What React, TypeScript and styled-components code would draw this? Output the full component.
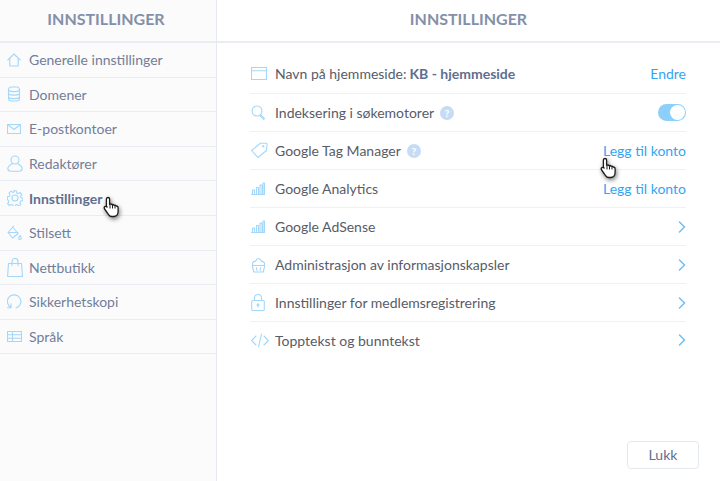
import React from 'react';
import styled, { createGlobalStyle } from 'styled-components';

const GlobalStyle = createGlobalStyle`
  html, body {
    margin: 0;
    padding: 0;
    background: #fff;
  }
  body {
    font-family: Lato, "Liberation Sans", sans-serif;
    overflow: hidden;
  }
`;

const Wrapper = styled.div`
  width: 720px;
  height: 481px;
  display: flex;
  overflow: hidden;
`;

const Sidebar = styled.aside`
  width: 217px;
  height: 100%;
  flex-shrink: 0;
  box-sizing: border-box;
  background: #fbfbfc;
  border-right: 1px solid #e6eaf0;
`;

const SideTitle = styled.h2`
  margin: 0;
  height: 43px;
  box-sizing: border-box;
  border-bottom: 2px solid #e9edf3;
  display: flex;
  align-items: center;
  justify-content: center;
  padding: 0 4px 5px 0;
  font-size: 16px;
  font-weight: 700;
  color: #8490a9;
`;

const SideRow = styled.div<{ $active?: boolean }>`
  position: relative;
  height: 34.6px;
  box-sizing: border-box;
  border-bottom: 1.5px solid #e9edf3;
  display: flex;
  align-items: center;
  gap: 8px;
  padding-left: 7px;
  font-size: 14px;
  font-weight: ${({ $active }) => ($active ? 700 : 400)};
  color: ${({ $active }) => ($active ? '#5f6e8f' : '#727e99')};
`;

const IconBox = styled.span`
  width: 14px;
  height: 18px;
  display: flex;
  align-items: center;
  justify-content: flex-start;
  flex-shrink: 0;
  color: #a3d8fb;
  overflow: visible;
`;

const Main = styled.main`
  flex: 1;
  height: 100%;
  display: flex;
  flex-direction: column;
`;

const MainTitle = styled.h1`
  margin: 0;
  height: 43px;
  box-sizing: border-box;
  border-bottom: 2px solid #e9edf3;
  display: flex;
  align-items: center;
  justify-content: center;
  padding-bottom: 5px;
  font-size: 16px;
  font-weight: 700;
  color: #8490a9;
`;

const List = styled.div`
  margin: 12px 34px 0 33px;
  flex: 1;
`;

const Row = styled.div`
  position: relative;
  height: 38px;
  box-sizing: border-box;
  border-bottom: 1px solid #eff1f5;
  display: flex;
  align-items: center;
  font-size: 14px;
  color: #575c68;

  &:first-child {
    height: 39px;
    padding-bottom: 1px;
  }

  &:last-child {
    border-bottom: none;
    padding-bottom: 2px;
  }
`;

const RowIcon = styled.span`
  width: 25px;
  height: 20px;
  box-sizing: border-box;
  padding-left: 1px;
  display: flex;
  align-items: center;
  flex-shrink: 0;
  color: #a3d8fb;
`;

const Label = styled.span`
  flex: 1;
  display: flex;
  align-items: center;
  gap: 6px;
  white-space: nowrap;
`;

const Strong = styled.b`
  color: #5f6e8f;
  font-weight: 700;
  margin-left: 3px;
`;

const Action = styled.a`
  color: #33a4f4;
  font-size: 14px;
`;

const Help = styled.span`
  width: 14px;
  height: 14px;
  border-radius: 50%;
  background: #c6dcf5;
  color: #fff;
  font-size: 10px;
  font-weight: 900;
  display: flex;
  align-items: center;
  justify-content: center;
`;

const Toggle = styled.span`
  width: 28px;
  height: 17px;
  border-radius: 9px;
  background: #8dcffb;
  position: relative;
  &::after {
    content: '';
    position: absolute;
    right: 1px;
    top: 1px;
    width: 15px;
    height: 15px;
    border-radius: 50%;
    background: #fff;
  }
`;

const Footer = styled.div`
  display: flex;
  justify-content: flex-end;
  padding: 0 21px 12px 0;
`;

const CloseButton = styled.button`
  width: 72px;
  height: 28px;
  box-sizing: border-box;
  background: #fff;
  border: 1.5px solid #e4e8ef;
  border-radius: 4px;
  padding: 0 0 2px;
  font-family: inherit;
  font-size: 14px;
  color: #5f6e8f;
`;

const CursorSpot = styled.span<{ $left: number; $top: number }>`
  position: absolute;
  left: ${({ $left }) => $left}px;
  top: ${({ $top }) => $top}px;
  width: 18px;
  height: 22px;
  filter: drop-shadow(1px 2px 2px rgba(0, 0, 0, 0.5));
`;

const Hand = () => (
  <svg width="18" height="22" viewBox="0 0 18 22">
    <path
      d="M5 1.500c1 0 1.600.7 1.600 1.600v5.200l.6-.2c.8-.2 1.500 0 1.800.6.8-.3 1.600-.1 2 .6.9-.3 1.700 0 2.100.7 1-.1 2 .5 2 1.800v3.700c0 2.600-1.600 5-4.600 5H9c-1.700 0-2.700-.8-3.600-2.200L1.600 13c-.6-.9-.4-1.900.3-2.400.7-.5 1.600-.3 2.200.4l-.7-.6V3.100C3.400 2.200 4 1.500 5 1.500z"
      fill="#fff"
      stroke="#1c1c1c"
      strokeWidth="1.300"
      strokeLinejoin="round"
    />
    <path d="M7 8.500v4M9.500 8.500v4M12 9v3.500" stroke="#1c1c1c" strokeWidth="1" fill="none" />
  </svg>
);

const Glyph = ({ children, w = 16, h = 16 }: { children: React.ReactNode; w?: number; h?: number }) => (
  <svg
    width={w}
    height={h}
    viewBox={`0 0 ${w} ${h}`}
    fill="none"
    stroke="currentColor"
    strokeWidth="1.100"
    strokeLinecap="round"
    strokeLinejoin="round"
    style={{ flexShrink: 0 }}
  >
    {children}
  </svg>
);

const HomeIcon = () => (
  <Glyph w={14} h={14}>
    <path d="M.8 7 7 1l6.200 6M2.800 5.500v7.500h8.400V5.500" />
  </Glyph>
);
const DbIcon = () => (
  <Glyph w={14} h={16}>
    <rect x="1.500" y="1" width="11" height="14" rx="3" />
    <path d="M1.500 4.500c2 1.500 9 1.500 11 0M1.500 8c2 1.500 9 1.500 11 0M1.500 11.500c2 1.500 9 1.500 11 0" />
  </Glyph>
);
const MailIcon = () => (
  <Glyph w={14} h={10}>
    <rect x=".5" y=".5" width="13" height="9" />
    <path d="m.5.500 6.500 5 6.500-5" />
  </Glyph>
);
const UserIcon = () => (
  <Glyph w={16} h={17}>
    <circle cx="8" cy="5" r="4" />
    <path d="M5.500 8.500C3 10 .8 11.500.8 13.500c0 1.500 1.200 2.700 3 2.700h8.400c1.800 0 3-1.200 3-2.700 0-2-2.200-3.500-4.700-5" />
  </Glyph>
);
const GearIcon = () => (
  <Glyph w={16} h={16}>
    <circle cx="8" cy="8" r="3" />
    <path d="M6.700.8h2.600l.4 2.100 1.500.7 1.900-1 1.700 2-1.200 1.700.4 1.500 2 .8v0l-.2 1.900-2.100.5-.8 1.500.9 1.900-2 1.500-1.600-1.300-1.600.5-.7 1.900H6.400l-.6-2-1.600-.6-1.800 1.100-1.800-1.900 1.200-1.700-.5-1.500L.3 9.400V6.800l2.100-.6.7-1.500-1-1.800 1.900-1.700 1.700 1.200 1.500-.6z" />
  </Glyph>
);
const PaintIcon = () => (
  <Glyph w={15} h={16}>
    <path d="M6.500 1 5 3 1 7.500 5.500 13l5.500-4.500L6.500 3M1.500 7.500h9.500" />
    <path d="M13 10.500c-.8 1.200-1.300 2-1.300 2.700a1.300 1.300 0 0 0 2.600 0c0-.7-.5-1.500-1.300-2.700z" />
  </Glyph>
);
const BagIcon = () => (
  <Glyph w={16} h={19}>
    <path d="M1.500 5.500h13l1 13H.6zM5 7.500V3.500a3 3 0 0 1 6 0v4" />
  </Glyph>
);
const BackupIcon = () => (
  <Glyph w={15} h={15}>
    <path d="M4 13.500A6.700 6.700 0 1 1 9 14M4 9.800v3.900H.5" />
  </Glyph>
);
const LangIcon = () => (
  <Glyph w={15} h={11}>
    <rect x=".5" y=".5" width="14" height="10" />
    <path d="M.5 3.800h14M.5 7.200h14M5.500.500v10" />
  </Glyph>
);
const BrowserIcon = () => (
  <Glyph w={16} h={13}>
    <rect x=".5" y=".5" width="15" height="12" />
    <path d="M.5 3.800h15" />
  </Glyph>
);
const SearchIcon = () => (
  <Glyph w={15} h={15}>
    <circle cx="6" cy="6" r="5" />
    <path d="m9.800 9.800 1.200 1 2.500 2.700-.8.8-2.800-2.600-.8-1.100" />
  </Glyph>
);
const TagIcon = () => (
  <Glyph w={17} h={17}>
    <path d="M.6 8.500 9.500 1.200l5.700.1c.6 0 1 .4 1 1l-.8 6.200-8.500 7zM12.800 4.300a.6.6 0 1 0 0 .1" />
  </Glyph>
);
const BarsIcon = () => (
  <Glyph w={14} h={13}>
    <path d="M.5 12.500h13M1.500 12.500V8h2v4.500M5.500 12.500v-7h2v7M9 12.500V3h2v9.500M12 12.500V1h1.500v11.500" />
  </Glyph>
);
const CookieIcon = () => (
  <Glyph w={15} h={16}>
    <path d="M1.200 8.500h12.600L12.200 15H2.800zM2 8.300C.6 6 2.600 4 4.300 4.400 5.300 2.500 6.300 1.500 7.500 1.500s2.200 1 3.200 2.900C12.400 4 14.400 6 13 8.300M5.500 10.500l.4 3M9.500 10.500l-.4 3" />
  </Glyph>
);
const LockIcon = () => (
  <Glyph w={14} h={17}>
    <rect x=".7" y="6.500" width="12.600" height="10" rx="1" />
    <path d="M3.500 6.500V4a3.500 3.500 0 0 1 7 0v2.500M7 10.500v2.500" />
    <circle cx="7" cy="10.800" r="1" />
  </Glyph>
);
const CodeIcon = () => (
  <Glyph w={18} h={15}>
    <path d="M5 3 .7 7.500 5 12M13 3l4.300 4.500L13 12M10.500 1 7.500 14" />
  </Glyph>
);
const Chevron = () => (
  <svg width="8" height="12" viewBox="0 0 8 12" fill="none" stroke="#6fbdf5" strokeWidth="1.500" strokeLinecap="round" strokeLinejoin="round">
    <path d="m1.500 1 5 5-5 5" />
  </svg>
);

const sideItems = [
  { label: 'Generelle innstillinger', icon: <HomeIcon /> },
  { label: 'Domener', icon: <DbIcon /> },
  { label: 'E-postkontoer', icon: <MailIcon /> },
  { label: 'Redaktører', icon: <UserIcon /> },
  { label: 'Innstillinger', icon: <GearIcon />, active: true },
  { label: 'Stilsett', icon: <PaintIcon /> },
  { label: 'Nettbutikk', icon: <BagIcon /> },
  { label: 'Sikkerhetskopi', icon: <BackupIcon /> },
  { label: 'Språk', icon: <LangIcon /> },
];

const App = () => (
  <Wrapper>
    <GlobalStyle />
    <Sidebar>
      <SideTitle>INNSTILLINGER</SideTitle>
      {sideItems.map((item) => (
        <SideRow key={item.label} $active={item.active}>
          <IconBox>{item.icon}</IconBox>
          {item.label}
          {item.active && (
            <CursorSpot $left={103} $top={15}>
              <Hand />
            </CursorSpot>
          )}
        </SideRow>
      ))}
    </Sidebar>
    <Main>
      <MainTitle>INNSTILLINGER</MainTitle>
      <List>
        <Row>
          <RowIcon><BrowserIcon /></RowIcon>
          <Label>
            <span>Navn på hjemmeside:<Strong>KB - hjemmeside</Strong></span>
          </Label>
          <Action>Endre</Action>
        </Row>
        <Row>
          <RowIcon><SearchIcon /></RowIcon>
          <Label>Indeksering i søkemotorer <Help>?</Help></Label>
          <Toggle />
        </Row>
        <Row>
          <RowIcon><TagIcon /></RowIcon>
          <Label>Google Tag Manager <Help>?</Help></Label>
          <Action>Legg til konto</Action>
          <CursorSpot $left={350} $top={25}>
            <Hand />
          </CursorSpot>
        </Row>
        <Row>
          <RowIcon><BarsIcon /></RowIcon>
          <Label>Google Analytics</Label>
          <Action>Legg til konto</Action>
        </Row>
        <Row>
          <RowIcon><BarsIcon /></RowIcon>
          <Label>Google AdSense</Label>
          <Chevron />
        </Row>
        <Row>
          <RowIcon><CookieIcon /></RowIcon>
          <Label>Administrasjon av informasjonskapsler</Label>
          <Chevron />
        </Row>
        <Row>
          <RowIcon><LockIcon /></RowIcon>
          <Label>Innstillinger for medlemsregistrering</Label>
          <Chevron />
        </Row>
        <Row>
          <RowIcon><CodeIcon /></RowIcon>
          <Label>Topptekst og bunntekst</Label>
          <Chevron />
        </Row>
      </List>
      <Footer>
        <CloseButton>Lukk</CloseButton>
      </Footer>
    </Main>
  </Wrapper>
);

export default App;
